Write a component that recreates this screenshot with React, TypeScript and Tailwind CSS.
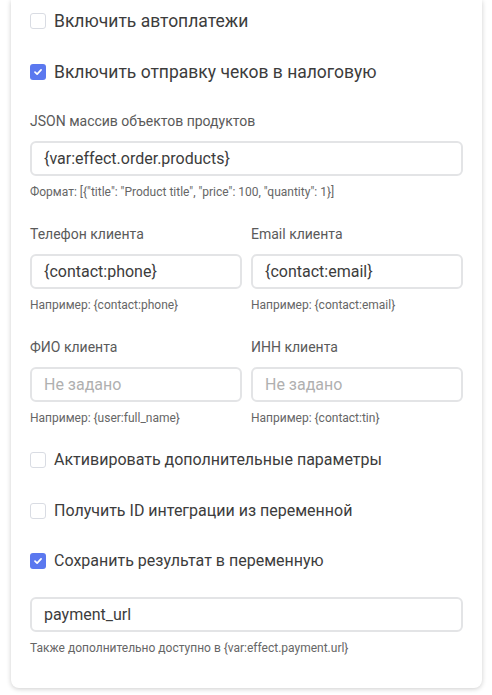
import React from "react";

function Check({ checked, label, className = "", big }: { checked?: boolean; label: string; className?: string; big?: boolean }) {
  return (
    <div className={"flex items-center h-6 " + className}>
      {checked ? (
        <span className="w-4 h-4 rounded-[3px] bg-[#5b78ef] flex items-center justify-center shrink-0">
          <svg width="10" height="10" viewBox="0 0 10 10" fill="none">
            <path d="M2 5.2 L4.1 7.2 L8.1 2.9" stroke="white" strokeWidth="1.7" strokeLinecap="round" strokeLinejoin="round" />
          </svg>
        </span>
      ) : (
        <span className="w-4 h-4 rounded-[3px] border border-[#d9dce3] bg-white shrink-0" />
      )}
      <span className={(big ? "text-[17.5px] " : "text-[16px] ") + "ml-2 text-[#3c3c3c] leading-6"}>{label}</span>
    </div>
  );
}

function Field({ value, placeholder }: { value?: string; placeholder?: string }) {
  return (
    <div className="h-[35px] rounded-[6px] border-2 border-[#e3e4e6] bg-white flex items-center px-3">
      {value ? (
        <span className="text-[16px] text-[#3c3c3c]">{value}</span>
      ) : (
        <span className="text-[16px] text-[#b0b0b0]">{placeholder}</span>
      )}
    </div>
  );
}

function Label({ children }: { children: React.ReactNode }) {
  return <div className="text-[14px] leading-5 text-[#5a5a5a]">{children}</div>;
}

function Help({ children }: { children: React.ReactNode }) {
  return <div className="text-[12px] leading-4 text-[#666] mt-2">{children}</div>;
}

function Col({ label, value, placeholder, help }: { label: string; value?: string; placeholder?: string; help: string }) {
  return (
    <div className="flex flex-col">
      <Label>{label}</Label>
      <div className="mt-[10px]">
        <Field value={value} placeholder={placeholder} />
      </div>
      <Help>{help}</Help>
    </div>
  );
}

export default function App() {
  return (
    <div className="min-h-[695px] bg-white" style={{ fontFamily: "Roboto, 'Noto Sans', sans-serif" }}>
      <div className="ml-[11px] w-[471px] bg-white rounded-b-[8px] shadow-[0_1px_5px_rgba(0,0,0,0.2)] px-[19px] pt-[9px] pb-8">
        <Check big label="Включить автоплатежи" />
        <Check big checked label="Включить отправку чеков в налоговую" className="mt-[27px]" />
        <div className="mt-[27px]">
          <Col
            label="JSON массив объектов продуктов"
            value="{var:effect.order.products}"
            help={'Формат: [{"title": "Product title", "price": 100, "quantity": 1}]'}
          />
        </div>
        <div className="grid grid-cols-2 gap-x-[9px] mt-[24px]">
          <Col label="Телефон клиента" value="{contact:phone}" help="Например: {contact:phone}" />
          <Col label="Email клиента" value="{contact:email}" help="Например: {contact:email}" />
        </div>
        <div className="grid grid-cols-2 gap-x-[9px] mt-[24px]">
          <Col label="ФИО клиента" placeholder="Не задано" help="Например: {user:full_name}" />
          <Col label="ИНН клиента" placeholder="Не задано" help="Например: {contact:tin}" />
        </div>
        <Check label="Активировать дополнительные параметры" className="mt-[22px]" />
        <Check label="Получить ID интеграции из переменной" className="mt-[27px]" />
        <Check checked label="Сохранить результат в переменную" className="mt-[26px]" />
        <div className="mt-[24px]">
          <Field value="payment_url" />
          <Help>Также дополнительно доступно в {"{var:effect.payment.url}"}</Help>
        </div>
      </div>
    </div>
  );
}
